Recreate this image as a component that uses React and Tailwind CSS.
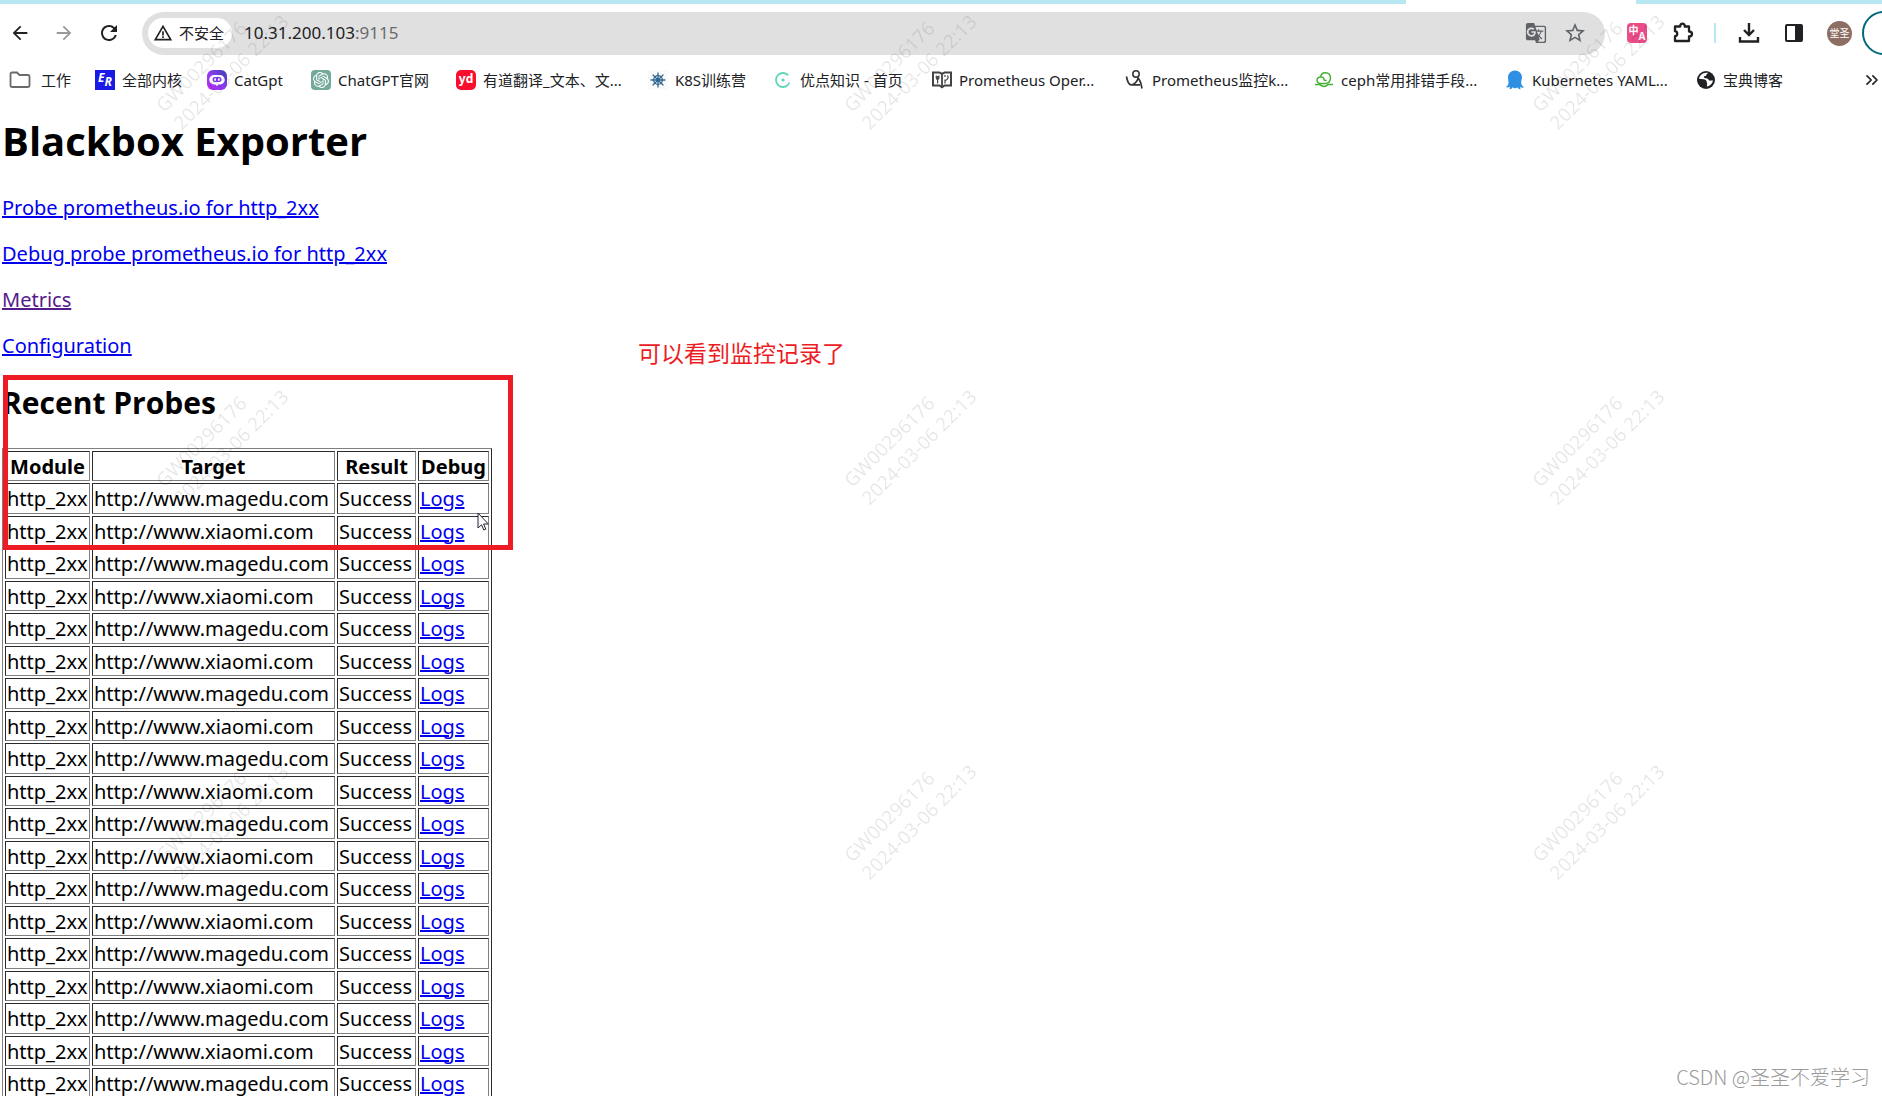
import React from "react";
import {
  MdArrowBack,
  MdArrowForward,
  MdRefresh,
  MdWarningAmber,
  MdGTranslate,
  MdStarBorder,
} from "react-icons/md";
import { SiOpenai } from "react-icons/si";
import { ChevronsRight } from "lucide-react";

const FolderIcon = () => (
  <svg viewBox="0 0 22 20" className="h-5 w-[22px]">
    <path d="M1.500 4a1.500 1.500 0 0 1 1.500-1.500h5l2.500 2.500h8.500a1.500 1.500 0 0 1 1.500 1.500v9a1.500 1.500 0 0 1-1.500 1.500h-16a1.500 1.500 0 0 1-1.500-1.500z" fill="none" stroke="#6a6a6a" strokeWidth="1.800" />
  </svg>
);

const CatIcon = () => (
  <svg viewBox="0 0 20 20" className="size-5">
    <defs>
      <linearGradient id="cat" x1="1" y1="0" x2="0" y2="1">
        <stop offset="0" stopColor="#3b3fb5" />
        <stop offset="0.5" stopColor="#8a3df0" />
        <stop offset="1" stopColor="#c026f5" />
      </linearGradient>
    </defs>
    <rect width="20" height="20" rx="6" fill="url(#cat)" />
    <path d="M7 5h6a4 4 0 0 1 0 9.500h-1.500l-1.500 1.500-1.500-1.500H7A4 4 0 0 1 7 5z" fill="#fff" />
    <rect x="5.500" y="7" width="9" height="5" rx="2.500" fill="#7c3df0" />
    <rect x="7.300" y="8.200" width="1.700" height="2.700" rx="0.800" fill="#fff" />
    <rect x="11" y="8.200" width="1.700" height="2.700" rx="0.800" fill="#fff" />
  </svg>
);

const WheelIcon = () => (
  <svg viewBox="0 0 20 20" className="size-5 bg-[#fafafa]">
    <g stroke="#2f6690" strokeWidth="1.300" fill="none" strokeLinecap="round">
      <circle cx="10" cy="10" r="4.300" />
      <circle cx="10" cy="10" r="1.500" fill="#2f6690" />
      <path d="M10 3v14M3 10h14M5 5l10 10M15 5L5 15" />
    </g>
  </svg>
);

const RingIcon = () => (
  <svg viewBox="0 0 20 20" className="size-5">
    <path d="M15.200 5.300A7 7 0 1 0 15.200 14.700" fill="none" stroke="#5cd6b8" strokeWidth="1.800" />
    <circle cx="10" cy="10" r="1.600" fill="#5cd6b8" />
    <path d="M16.500 12.500l-1.300 2.200" stroke="#5cd6b8" strokeWidth="1.500" />
  </svg>
);

const BookIcon = () => (
  <svg viewBox="0 0 20 20" className="size-5">
    <path d="M1 2.500h6.500l2.500 1.300 2.500-1.300h6.500v13h-6.500l-2.500 1.800-2.500-1.800h-6.500z" fill="#fff" stroke="#444" strokeWidth="2" />
    <path d="M10 3.500v13" stroke="#444" strokeWidth="1.800" />
    <path d="M4.300 5.500v2.500a1.200 1.200 0 0 0 2.600 0v-2.500M5.600 6v7.500M13 13.500v-4M13 5v2M15.500 5.500c1 1.200 .8 4-2.300 5" fill="none" stroke="#444" strokeWidth="1.200" />
  </svg>
);

const FigureIcon = () => (
  <svg viewBox="0 0 20 20" className="size-5">
    <circle cx="11" cy="4" r="3.200" fill="none" stroke="#333" strokeWidth="1.500" />
    <path d="M1.500 6.500c.8 5 2.500 8 4.500 8.500 3-.5 6-3 7.500-7.500M12.500 7.500c2 1.500 3.500 5 4.500 11M6 14.800h9" fill="none" stroke="#333" strokeWidth="1.700" />
  </svg>
);

const CloudIcon = () => (
  <svg viewBox="0 0 20 20" className="size-5">
    <path d="M7.500 13.500c-6 0-5.500-6-1-6.500 1-6 9.500-5.500 10 .5 0 3.500-2 6-5.500 6H7.500M6.500 7c2.500-.5 3.500 1 3.500 2.500 0 1 1.500 1.500 2.500.5" fill="none" stroke="#45b035" strokeWidth="1.500" />
    <path d="M1 14.500h4c2 0 3 2 5 2s3-2 5-2h4" fill="none" stroke="#45b035" strokeWidth="1.700" />
  </svg>
);

const SquidIcon = () => (
  <svg viewBox="0 0 20 20" className="size-5">
    <path d="M10 .5c4 0 7 3 7 6.800 0 2-.8 3.200-.8 5.200s1 3.500 2.800 4.800c-1.500.7-3 .3-4-.6l.5 2.500c-1.400.2-2.400-.6-3-1.900-.5.700-1.500 1-2.500 1s-1.800-.3-2.300-1c-.8 1.300-1.800 2.100-3.200 1.900l.5-2.500c-1.200.9-2.800 1.100-4.200.4 1.800-1 2.700-2.600 2.700-4.600S3 9.500 3 7.300C3 3.500 6 .5 10 .5z" fill="#2f8fe3" />
  </svg>
);

const GlobeIcon = () => (
  <svg viewBox="0 0 20 20" className="size-5">
    <circle cx="10" cy="10" r="9" fill="#202124" />
    <path d="M11.500 2.800c-1 .6-1.800 1-1.800 2.200 0 1.300-2.200.8-2.200 2.300 0 1.200 1.800 1 3.300 1 1.700 0 1.700 1.500 2.700 1.800 1 .2 1.700-.5 3.500-.5-.2 3.200-1.800 5.400-4.500 6.500-1 .2-1.200-.5-.8-1.500.5-1.300-.7-1.600-.7-2.600 0-1.500-1.700-2.300-3.500-2.300H2.900C3 6 6.500 2.300 11.500 2.800z" fill="#fff" transform="rotate(8 10 10)" />
  </svg>
);

const PuzzleIcon = () => (
  <svg viewBox="0 0 24 24" className="size-6">
    <path d="M4 5.500h5.200c-.3-3.800 4.800-3.800 4.600 0H18v5c4 0 4 5 0 5V20H4v-4.800c3-.5 3-4.600 0-5z" fill="none" stroke="currentColor" strokeWidth="2.300" strokeLinejoin="round" />
  </svg>
);

const DownloadIcon = () => (
  <svg viewBox="0 0 24 24" className="size-6">
    <path d="M12 2v11M7 9l5 5 5-5M3 16v4.500h18V16" fill="none" stroke="currentColor" strokeWidth="2.400" />
  </svg>
);

const ErIcon = () => (
  <span className="flex size-5 items-center justify-center bg-[#1a1ae6] text-xs leading-none font-bold text-white italic">
    <span className="pb-1">E</span>
    <span className="pt-1">R</span>
  </span>
);

const YdIcon = () => (
  <span className="flex size-5 items-center justify-center rounded-[5px] bg-[#fc0d2c] pb-[3px] text-xs leading-none font-bold text-white">yd</span>
);

const GptIcon = () => (
  <span className="flex size-5 items-center justify-center rounded bg-[#74aa9c]">
    <SiOpenai className="size-4 text-white" />
  </span>
);

const bookmarks = [
  { label: "工作", icon: <FolderIcon />, width: "w-[86px] gap-[10px]" },
  { label: "全部内核", icon: <ErIcon />, width: "w-[112px] gap-[7px]" },
  { label: "CatGpt", icon: <CatIcon />, width: "w-[104px] gap-[7px]" },
  { label: "ChatGPT官网", icon: <GptIcon />, width: "w-[145px] gap-[7px]" },
  { label: "有道翻译_文本、文...", icon: <YdIcon />, width: "w-[192px] gap-[7px]" },
  { label: "K8S训练营", icon: <WheelIcon />, width: "w-[125px] gap-[7px]" },
  { label: "优点知识 - 首页", icon: <RingIcon />, width: "w-[159px] gap-[7px]" },
  { label: "Prometheus Oper...", icon: <BookIcon />, width: "w-[193px] gap-[7px]" },
  { label: "Prometheus监控k...", icon: <FigureIcon />, width: "w-[189px] gap-[7px]" },
  { label: "ceph常用排错手段...", icon: <CloudIcon />, width: "w-[191px] gap-[7px]" },
  { label: "Kubernetes YAML...", icon: <SquidIcon />, width: "w-[191px] gap-[7px]" },
  { label: "宝典博客", icon: <GlobeIcon />, width: "w-[110px] gap-[7px]" },
];

const probes = Array.from({ length: 19 }, (_, i) => ({
  module: "http_2xx",
  target: i % 2 ? "http://www.xiaomi.com" : "http://www.magedu.com",
  result: "Success",
}));

const links = [
  { text: "Probe prometheus.io for http_2xx", color: "text-[#0000ee]" },
  { text: "Debug probe prometheus.io for http_2xx", color: "text-[#0000ee]" },
  { text: "Metrics", color: "text-[#551a8b]" },
  { text: "Configuration", color: "text-[#0000ee]" },
];

const inset = "border border-t-[#2c2c2c] border-l-[#2c2c2c] border-r-[#808080] border-b-[#808080]";

function Toolbar() {
  return (
    <div className="flex h-[58px] items-center overflow-hidden pl-2 text-[#202124]">
      <button aria-label="Back" className="flex w-6 justify-center"><MdArrowBack className="size-[22px]" /></button>
      <button aria-label="Forward" className="ml-5 flex w-6 justify-center text-[#9a9a9a]"><MdArrowForward className="size-[22px]" /></button>
      <button aria-label="Reload" className="ml-[21px] flex w-6 justify-center"><MdRefresh className="size-6" /></button>
      <div className="ml-[21px] flex h-[43px] min-w-0 flex-1 items-center rounded-full bg-[#e0e0e0] pr-[18px] pl-[6px]">
        <button className="flex h-[30px] w-[84px] shrink-0 items-center gap-[6px] rounded-full bg-white pl-[5px] text-[15px] whitespace-nowrap">
          <MdWarningAmber className="size-5 shrink-0" />
          不安全
        </button>
        <div className="ml-3 min-w-0 flex-1 text-[17px]">
          <span>10.31.200.103</span><span className="text-[#6b6b6b]">:9115</span>
        </div>
        <button aria-label="Translate" className="text-[#5f6368]"><MdGTranslate className="size-[22px]" /></button>
        <button aria-label="Bookmark" className="ml-4 text-[#5f6368]"><MdStarBorder className="size-6" /></button>
      </div>
      <button aria-label="Translator extension" className="ml-[22px] flex size-5 shrink-0 items-center justify-center rounded-sm bg-[#ea4c89] text-[10px] leading-none font-bold text-white">
        <span className="pb-[6px]">中</span><span className="pt-[6px]">A</span>
      </button>
      <button aria-label="Extensions" className="ml-6 shrink-0"><PuzzleIcon /></button>
      <span className="ml-[19px] h-5 w-[2px] shrink-0 bg-[#b7e8f2]" />
      <button aria-label="Downloads" className="ml-[21px] shrink-0"><DownloadIcon /></button>
      <button aria-label="Side panel" className="ml-6 shrink-0">
        <svg viewBox="0 0 18 18" className="size-[18px]">
          <rect x="1" y="1" width="16" height="16" rx="1" fill="none" stroke="currentColor" strokeWidth="2" />
          <path d="M10 1h7v16h-7z" fill="currentColor" />
        </svg>
      </button>
      <button aria-label="Profile" className="ml-6 flex size-[25px] shrink-0 items-center justify-center rounded-full bg-[#8d6e63] text-[10px] text-white">堂圣</button>
      <span className="-mr-6 ml-[10px] size-11 shrink-0 rounded-full border-2 border-[#00687a]" />
    </div>
  );
}

function Watermarks() {
  return (
    <div aria-hidden="true" className="pointer-events-none absolute inset-0 grid auto-rows-[375px] grid-cols-[repeat(3,688px)] overflow-hidden text-[19px] leading-[25px] text-black/10">
      {Array.from({ length: 9 }, (_, i) => (
        <div key={i} className="flex pt-9 pl-[145px]">
          <p className="h-[50px] w-[160px] -rotate-45 whitespace-nowrap">
            GW00296176<br />2024-03-06 22:13
          </p>
        </div>
      ))}
    </div>
  );
}

export default function App() {
  return (
    <div className="relative h-screen overflow-hidden bg-white font-['Noto_Sans','Noto_Sans_CJK_SC',sans-serif] text-black">
      <header>
        <div className="flex h-1 bg-[#b7e8f2]">
          <div className="ml-auto mr-[246px] h-1 w-[230px] bg-white" />
        </div>
        <Toolbar />
        <nav className="flex h-9 items-center pl-[9px] text-[15px] text-[#202124]">
          {bookmarks.map((b) => (
            <a key={b.label} href="#" className={`${b.width} flex shrink-0 items-center whitespace-nowrap`}>
              <span className="flex shrink-0 justify-center">{b.icon}</span>
              {b.label}
            </a>
          ))}
          <button aria-label="More bookmarks" className="ml-auto"><ChevronsRight className="size-5" /></button>
        </nav>
      </header>

      <main className="px-[2px] text-[20px] leading-[27px]">
        <h1 className="pt-[15px] font-['Open_Sans',sans-serif] text-[40px] leading-[56px] font-bold">Blackbox Exporter</h1>
        <div className="mt-[25px] flex flex-col items-start gap-[19px]">
          {links.map((l) => (
            <a key={l.text} href="#" className={`${l.color} underline decoration-2`}>{l.text}</a>
          ))}
        </div>
        <h2 className="mt-[23px] font-['Open_Sans',sans-serif] text-[30px] leading-[42px] font-bold">Recent Probes</h2>
        <table className="mt-6 w-[490px] table-fixed border-separate border-spacing-[2px] border border-t-[#808080] border-r-[#2c2c2c] border-b-[#2c2c2c] border-l-[#808080] whitespace-nowrap">
          <colgroup>
            <col className="w-[85px]" />
            <col className="w-[243px]" />
            <col className="w-[79px]" />
            <col className="w-[71px]" />
          </colgroup>
          <thead>
            <tr className="h-[30px]">
              {["Module", "Target", "Result", "Debug"].map((h) => (
                <th key={h} className={`${inset} p-0 text-center font-bold`}>{h}</th>
              ))}
            </tr>
          </thead>
          <tbody>
            {probes.map((p, i) => (
              <tr key={i} className="odd:h-[31px] even:h-[30px]">
                <td className={`${inset} px-px py-0`}>{p.module}</td>
                <td className={`${inset} px-px py-0`}>{p.target}</td>
                <td className={`${inset} px-px py-0`}>{p.result}</td>
                <td className={`${inset} px-px py-0`}><a href="#" className="text-[#0000ee] underline decoration-2">Logs</a></td>
              </tr>
            ))}
          </tbody>
        </table>
      </main>

      <Watermarks />
      <div className="pointer-events-none absolute top-[375px] left-[3px] h-[175px] w-[510px] border-[5px] border-[#ed1c24]" />
      <p className="absolute top-[336px] left-[638px] text-[23px] leading-[34px] text-[#ed1c24]">可以看到监控记录了</p>
      <svg viewBox="0 0 12 19" className="absolute top-[512px] left-[477px] h-[19px] w-3">
        <path d="M1 1v15l3.500-3.200L6.800 18l2-.8-2.200-5.200h4.700z" fill="#fff" stroke="#223" strokeWidth="1" />
      </svg>
      <p className="absolute right-3 bottom-1 font-['Noto_Sans_CJK_SC',sans-serif] text-[20px] leading-[30px] font-light text-[#9a9a9a]">CSDN @圣圣不爱学习</p>
    </div>
  );
}
